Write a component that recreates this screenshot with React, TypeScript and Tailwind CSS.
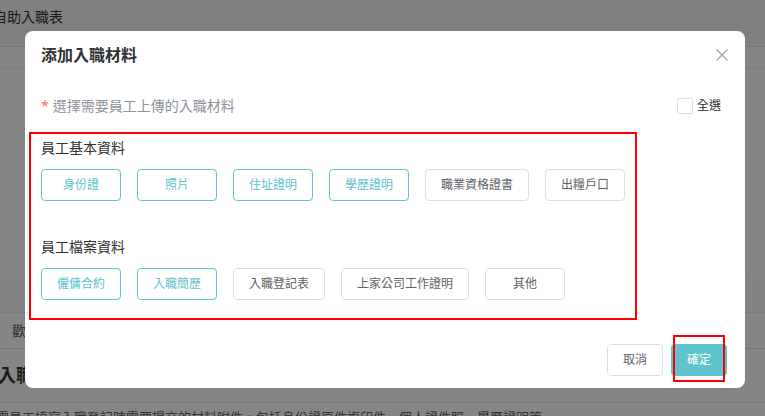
const basic = [
  { label: "身份證", on: true },
  { label: "照片", on: true },
  { label: "住址證明", on: true },
  { label: "學歷證明", on: true },
  { label: "職業資格證書", on: false },
  { label: "出糧戶口", on: false },
];

const archive = [
  { label: "僱傭合約", on: true },
  { label: "入職簡歷", on: true },
  { label: "入職登記表", on: false },
  { label: "上家公司工作證明", on: false },
  { label: "其他", on: false },
];

function Chip({ label, on }: { label: string; on: boolean }) {
  return (
    <button
      className={
        on
          ? "h-8 min-w-[80px] rounded border border-[#5fc4cd] bg-white px-[15px] text-xs text-[#5ec2cc]"
          : "h-8 min-w-[80px] rounded border border-[#dcdfe6] bg-white px-[15px] text-xs text-[#606266]"
      }
    >
      {label}
    </button>
  );
}

function Group({ title, items, top }: { title: string; items: { label: string; on: boolean }[]; top: string }) {
  return (
    <div className={top}>
      <p className="text-sm leading-5 text-[#303133]">{title}</p>
      <div className="mt-[11px] flex gap-4">
        {items.map((it) => (
          <Chip key={it.label} {...it} />
        ))}
      </div>
    </div>
  );
}

export default function App() {
  return (
    <div
      className="relative h-[416px] w-[765px] overflow-hidden bg-white"
      style={{ fontFamily: '"Noto Sans", "Noto Sans CJK TC", sans-serif' }}
    >
      {/* page underneath */}
      <div className="flex h-[47px] items-start border-b border-[#e6e8eb] bg-[#f5f6f8] pt-[7px]">
        <span className="ml-[-7px] text-sm text-[#303133]">自助入職表</span>
      </div>
      <div className="h-[21px] border-b border-[#eef0f2]" />
      <div className="mt-[209px] h-[36px] border-b border-[#eceef1] bg-[#fbfbfc]" />
      <div className="flex h-[36px] items-center border-b border-[#e4e7ed] pl-3 text-sm text-[#606266]">
        歡迎
      </div>
      <div className="flex h-[54px] items-center border-b border-[#e4e7ed] pb-[2px]">
        <span className="ml-[-2px] text-lg font-bold text-[#303133]">入職材料</span>
      </div>
      <p className="ml-[-4px] mt-[5px] whitespace-nowrap text-[13px] text-[#606266]">
        需員工填寫入職登記時需要提交的材料附件，包括身份證原件複印件、個人證件照、學歷證明等
      </p>

      <div className="absolute inset-0 bg-black/[0.48]" />

      {/* dialog */}
      <div className="absolute left-[25px] top-[31px] h-[357px] w-[720px] rounded-lg bg-white">
        <div className="flex h-12 items-center justify-between pl-4 pr-[17px]">
          <h2 className="text-base font-bold text-[#303133]">添加入職材料</h2>
          <svg width="12" height="12" viewBox="0 0 12 12" className="text-[#a0a3aa]">
            <path d="M0.5 0.5L11.5 11.5M11.5 0.5L0.5 11.5" stroke="currentColor" strokeWidth="1.2" />
          </svg>
        </div>

        <div className="mt-[17px] flex h-5 items-center justify-between pl-4 pr-[24px]">
          <p className="text-sm text-[#8e929b]">
            <span className="mr-1 text-[#f56c6c]">*</span>選擇需要員工上傳的入職材料
          </p>
          <label className="flex items-center gap-1 text-xs text-[#303133]">
            <span className="h-4 w-4 rounded-[2px] border border-[#dcdfe6] bg-white" />
            全選
          </label>
        </div>

        <div className="mx-1 mt-4 w-[608px] border-2 border-[#ff0000] px-[10px] pb-[18px] pt-1">
          <Group title="員工基本資料" items={basic} top="" />
          <Group title="員工檔案資料" items={archive} top="mt-9" />
        </div>

        <div className="mt-6 flex justify-end gap-2 pr-[18px]">
          <button className="h-8 w-14 rounded border border-[#dcdfe6] bg-white text-xs text-[#606266]">取消</button>
          <div className="relative">
            <button className="h-8 w-14 rounded bg-[#5ec5ce] text-xs text-white">確定</button>
            <div className="absolute bottom-[-6px] left-[2px] right-[2px] top-[-9px] border-2 border-[#ff0000]" />
          </div>
        </div>
      </div>
    </div>
  );
}
